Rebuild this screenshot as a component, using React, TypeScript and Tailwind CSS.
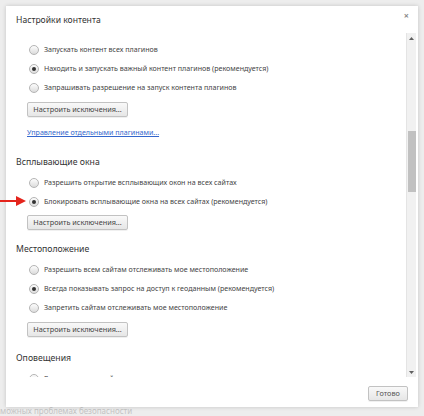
import { ReactNode } from 'react'

const font = { fontFamily: '"Noto Sans", "Open Sans", sans-serif' }

function Radio({ checked, label }: { checked?: boolean; label: string }) {
  return (
    <div className="flex h-[19px] items-center gap-[5px] pl-[23px]">
      <span className="flex h-[10px] w-[10px] items-center justify-center rounded-full border border-[#b4b4b4] bg-gradient-to-b from-[#fdfdfd] to-[#dcdcdc]">
        {checked && <span className="h-[4px] w-[4px] rounded-full bg-[#333]" />}
      </span>
      <span className="text-[7.1px] leading-none text-[#444]">{label}</span>
    </div>
  )
}

function Btn({ children, className = '' }: { children: ReactNode; className?: string }) {
  return (
    <div
      className={`flex h-[15px] items-center justify-center rounded-[2px] border border-[#c2c2c2] bg-gradient-to-b from-[#f9f9f9] to-[#e6e6e6] text-[7.3px] leading-none text-[#444] shadow-[0_1px_0_rgba(0,0,0,0.06)] ${className}`}
    >
      {children}
    </div>
  )
}

function Heading({ children, className = '' }: { children: ReactNode; className?: string }) {
  return <div className={`flex h-[16px] items-center pl-[10px] text-[8.7px] leading-none text-[#333] ${className}`}>{children}</div>
}

export default function App() {
  return (
    <div className="relative h-[416px] w-[424px] overflow-hidden bg-[#ededed]" style={font}>
      {/* page behind the dialog */}
      <div className="absolute bottom-[1px] left-0 text-[8px] leading-none text-[#c4c4c4]">можных проблемах безопасности</div>

      <div className="relative pl-[6px] pt-[6px]">
        <div className="flex h-[401px] w-[412px] flex-col bg-white shadow-[0_0_4px_rgba(0,0,0,0.18)]">
          {/* title */}
          <div className="flex h-[27px] items-start justify-between">
            <div className="pl-[10px] pt-[10px] text-[8.6px] leading-none text-[#333]">Настройки контента</div>
            <div className="pr-[9px] pt-[5px] text-[9px] font-bold leading-none text-[#8a8a8a]">×</div>
          </div>

          {/* scroll area */}
          <div className="flex h-[344px] overflow-hidden">
            <div className="flex-1 overflow-hidden pt-[7px]">
              <Radio label="Запускать контент всех плагинов" />
              <Radio checked label="Находить и запускать важный контент плагинов (рекомендуется)" />
              <Radio label="Запрашивать разрешение на запуск контента плагинов" />
              <div className="mt-[5px] pl-[21px]">
                <Btn className="w-[101px]">Настроить исключения...</Btn>
              </div>
              <div className="mt-[8px] flex h-[16px] items-center pl-[21px]">
                <span className="text-[7.1px] leading-none text-[#3366cc] underline">Управление отдельными плагинами...</span>
              </div>

              <Heading className="mt-[13px]">Всплывающие окна</Heading>
              <div className="mt-[3px]">
                <Radio label="Разрешить открытие всплывающих окон на всех сайтах" />
                <Radio checked label="Блокировать всплывающие окна на всех сайтах (рекомендуется)" />
              </div>
              <div className="mt-[4px] pl-[21px]">
                <Btn className="w-[101px]">Настроить исключения...</Btn>
              </div>

              <Heading className="mt-[11px]">Местоположение</Heading>
              <div className="mt-[3px]">
                <Radio label="Разрешить всем сайтам отслеживать мое местоположение" />
                <Radio checked label="Всегда показывать запрос на доступ к геоданным (рекомендуется)" />
                <Radio label="Запретить сайтам отслеживать мое местоположение" />
              </div>
              <div className="mt-[5px] pl-[21px]">
                <Btn className="w-[101px]">Настроить исключения...</Btn>
              </div>

              <Heading className="mt-[13px]">Оповещения</Heading>
              <div className="mt-[3px]">
                <Radio label="Разрешить всем сайтам показывать оповещения" />
              </div>
            </div>

            {/* scrollbar */}
            <div className="mr-[2px] flex w-[10px] flex-col border-l border-[#e4e4e4] bg-[#f1f1f1]">
              <div className="flex h-[10px] items-center justify-center">
                <svg width="5" height="3" viewBox="0 0 5 3"><path d="M0 3 L2.5 0 L5 3 Z" fill="#606060" /></svg>
              </div>
              <div className="mx-auto mt-[88px] h-[61px] w-[8px] bg-[#c1c1c1]" />
              <div className="flex-1" />
              <div className="flex h-[10px] items-center justify-center">
                <svg width="5" height="3" viewBox="0 0 5 3"><path d="M0 0 L5 0 L2.5 3 Z" fill="#606060" /></svg>
              </div>
            </div>
          </div>

          {/* footer */}
          <div className="flex flex-1 items-start justify-end pr-[10px] pt-[9px]">
            <Btn className="w-[40px] text-[#555]">Готово</Btn>
          </div>
        </div>
      </div>

      {/* red pointer arrow */}
      <svg className="absolute left-0 top-[195px]" width="27" height="12" viewBox="0 0 27 12">
        <path d="M0 6 H18" stroke="#e4241c" strokeWidth="2" />
        <path d="M16 1 L26 6 L16 11 Z" fill="#e4241c" />
      </svg>
    </div>
  )
}
